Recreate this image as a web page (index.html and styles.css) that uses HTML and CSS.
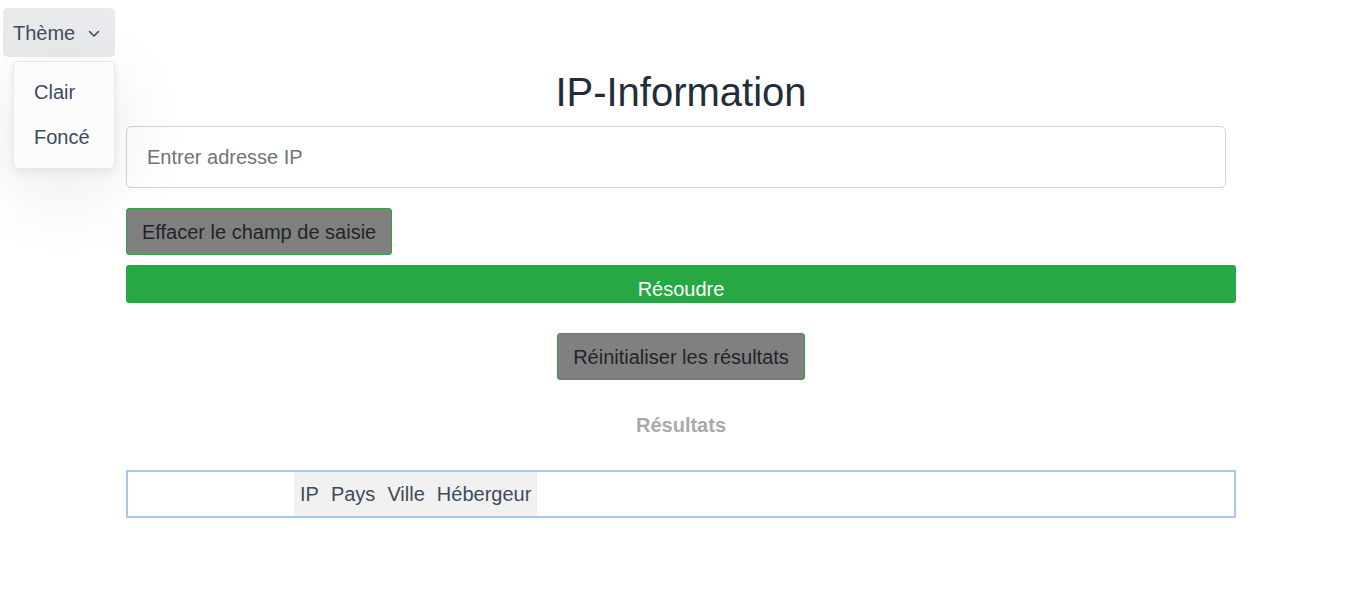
FILE: index.html
```html
<!DOCTYPE html>
<html lang="fr">
<head>
<meta charset="utf-8">
<title>IP-Information</title>
<link rel="stylesheet" href="styles.css">
</head>
<body>
<div class="theme">
  <button class="theme-btn">Thème
    <svg class="chev" width="12" height="8" viewBox="0 0 12 8"><path d="M1.5 1.5 L6 6 L10.5 1.5" fill="none" stroke="#3d4b5c" stroke-width="1.6" stroke-linecap="round" stroke-linejoin="round"/></svg>
  </button>
  <div class="menu">
    <div class="menu-item">Clair</div>
    <div class="menu-item">Foncé</div>
  </div>
</div>
<main class="container">
  <h1 class="title">IP-Information</h1>
  <input class="ip-input" type="text" placeholder="Entrer adresse IP">
  <div class="row-left"><button class="btn-gray">Effacer le champ de saisie</button></div>
  <button class="btn-green">Résoudre</button>
  <div class="row-center"><button class="btn-gray">Réinitialiser les résultats</button></div>
  <h2 class="results-title">Résultats</h2>
  <div class="results">
    <table class="results-table">
      <thead>
        <tr><th>IP</th><th>Pays</th><th>Ville</th><th>Hébergeur</th></tr>
      </thead>
    </table>
  </div>
</main>
</body>
</html>
```
FILE: styles.css
```css
html, body {
  margin: 0;
  padding: 0;
  background: #ffffff;
  font-family: "Liberation Sans", Arial, sans-serif;
}
body {
  position: relative;
}
.theme {
  position: absolute;
  left: 3px;
  top: 8px;
  z-index: 5;
}
.theme-btn {
  display: flex;
  align-items: center;
  gap: 13px;
  height: 49px;
  width: 112px;
  padding: 2px 0 0 10px;
  border: none;
  border-radius: 5px;
  background: #e9eaec;
  color: #3d4b5c;
  font-family: "Liberation Sans", Arial, sans-serif;
  font-size: 20px;
}
.chev {
  display: block;
  margin-top: 0;
}
.menu {
  margin: 4px 0 0 10px;
  width: 100px;
  padding: 8px 0;
  background: #fcfcfd;
  border: 1px solid #e6e8eb;
  border-radius: 5px;
  box-shadow: 0 4px 10px rgba(0, 0, 0, 0.06), 0 20px 80px rgba(0, 0, 0, 0.09);
}
.menu-item {
  padding: 0 0 0 20px;
  height: 45px;
  line-height: 45px;
  font-size: 20px;
  color: #3d4b5c;
}
.container {
  width: 1110px;
  margin: 0 0 0 126px;
  padding-top: 67px;
  display: flex;
  flex-direction: column;
}
.title {
  margin: 0 0 9px;
  text-align: center;
  font-weight: 400;
  font-size: 40px;
  line-height: 50px;
  color: #222d3b;
}
.ip-input {
  box-sizing: border-box;
  width: 1100px;
  height: 62px;
  margin: 0;
  padding: 0 20px;
  border: 1px solid #ced4da;
  border-radius: 5px;
  font-family: "Liberation Sans", Arial, sans-serif;
  font-size: 20px;
  color: #495057;
}
.ip-input::placeholder {
  color: #6c757d;
}
.row-left {
  display: flex;
  margin-top: 20px;
}
.btn-gray {
  height: 47px;
  padding: 2px 15px 0;
  background: #808080;
  border: 1px solid #28a745;
  border-radius: 3px;
  color: #212529;
  font-family: "Liberation Sans", Arial, sans-serif;
  font-size: 20px;
}
.btn-green {
  margin-top: 10px;
  height: 38px;
  padding: 10px 0 0;
  background: #28a745;
  border: none;
  border-radius: 3px;
  color: #ffffff;
  font-family: "Liberation Sans", Arial, sans-serif;
  font-size: 20px;
}
.row-center {
  display: flex;
  justify-content: center;
  margin-top: 30px;
}
.results-title {
  margin: 33px 0 0;
  text-align: center;
  font-size: 20px;
  line-height: 24px;
  font-weight: 700;
  color: #a9a9a9;
}
.results {
  margin-top: 33px;
  border: 2px solid #a8c8ec;
  height: 44px;
  padding-left: 166px;
}
.results-table {
  border-collapse: collapse;
  background: #f1f1f1;
}
.results-table th {
  height: 44px;
  padding: 0 6px;
  font-weight: 400;
  font-size: 20px;
  color: #3d4b5c;
}
```
